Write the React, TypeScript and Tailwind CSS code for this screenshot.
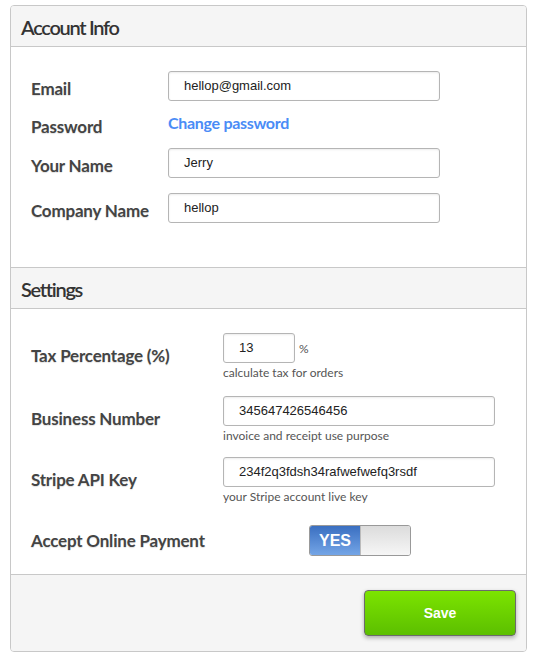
import React from "react";

const lato = { fontFamily: "Lato, 'Open Sans', sans-serif" };

function Label({ children, w }: { children: React.ReactNode; w: string }) {
  return (
    <div className={`${w} shrink-0 whitespace-nowrap font-['Lato',sans-serif] text-[17px] font-bold tracking-[-0.2px] text-[#444] [text-shadow:0_1px_1px_rgba(0,0,0,0.12)]`}>
      {children}
    </div>
  );
}

function Input({ value, w }: { value: string; w: string }) {
  return (
    <div
      className={`${w} h-[30px] rounded-[3px] border border-[#b5b5b5] bg-white pl-[15px] flex items-center font-['Liberation_Sans',Arial,sans-serif] text-[13px] text-[#222] shadow-[inset_0_1px_2px_rgba(0,0,0,0.08)]`}
    >
      {value}
    </div>
  );
}

function Header({ title }: { title: string }) {
  return (
    <div className="h-[41px] bg-[#f5f5f5] border-b border-[#c8c8c8] flex items-center pl-[10px] pt-[2px] font-['Lato',sans-serif] text-[20px] font-semibold tracking-[-1.3px] text-[#333]">
      {title}
    </div>
  );
}

function Helper({ children }: { children: React.ReactNode }) {
  return (
    <div className="h-[16px] pt-[2px] leading-[16px] font-['Lato',sans-serif] text-[12px] text-[#555]">{children}</div>
  );
}

export default function App() {
  return (
    <div className="w-[535px] h-[659px] bg-white pt-[5px] pl-[10px]" style={lato}>
      <div className="w-[517px] h-[647px] rounded-[4px] border border-[#c8c8c8] overflow-hidden flex flex-col">
        <Header title="Account Info" />
        <div className="h-[221px] shrink-0 border-b border-[#c8c8c8] pt-[24px] pl-[20px] flex flex-col">
          <div className="flex items-center h-[30px]">
            <div className="pt-[5px]"><Label w="w-[137px]">Email</Label></div>
            <Input value="hellop@gmail.com" w="w-[272px]" />
          </div>
          <div className="flex items-center h-[17px] mt-[15px]">
            <div className="pt-[5px]"><Label w="w-[137px]">Password</Label></div>
            <div className="font-['Lato',sans-serif] text-[16px] font-bold text-[#4a8cf6] tracking-[-0.3px] -mt-[3px]">
              Change password
            </div>
          </div>
          <div className="flex items-center h-[30px] mt-[15px]">
            <div className="pt-[5px]"><Label w="w-[137px]">Your Name</Label></div>
            <Input value="Jerry" w="w-[272px]" />
          </div>
          <div className="flex items-center h-[30px] mt-[15px]">
            <div className="pt-[5px]"><Label w="w-[137px]">Company Name</Label></div>
            <Input value="hellop" w="w-[272px]" />
          </div>
        </div>
        <Header title="Settings" />
        <div className="h-[266px] shrink-0 border-b border-[#c8c8c8] pt-[24px] pl-[20px] flex flex-col">
          <div className="flex items-center">
            <Label w="w-[192px]">Tax Percentage (%)</Label>
            <div className="flex flex-col">
              <div className="flex items-start">
                <Input value="13" w="w-[72px]" />
                <span className="ml-[4px] mt-[7px] font-['Lato',sans-serif] text-[12px] text-[#555]">%</span>
              </div>
              <Helper>calculate tax for orders</Helper>
            </div>
          </div>
          <div className="flex items-center mt-[17px]">
            <Label w="w-[192px]">Business Number</Label>
            <div className="flex flex-col">
              <Input value="345647426546456" w="w-[272px]" />
              <Helper>invoice and receipt use purpose</Helper>
            </div>
          </div>
          <div className="flex items-center mt-[15px]">
            <Label w="w-[192px]">Stripe API Key</Label>
            <div className="flex flex-col">
              <Input value="234f2q3fdsh34rafwefwefq3rsdf" w="w-[272px]" />
              <Helper>your Stripe account live key</Helper>
            </div>
          </div>
          <div className="flex items-center mt-[22px] h-[31px]">
            <Label w="w-[278px]">Accept Online Payment</Label>
            <div className="w-[102px] h-[31px] rounded-[3px] border border-[#999] flex overflow-hidden">
              <div className="w-[50px] h-full bg-gradient-to-b from-[#3a6fc1] to-[#74a5e6] flex items-center justify-center font-['Liberation_Sans',Arial,sans-serif] font-bold text-[16px] text-white">
                YES
              </div>
              <div className="flex-1 h-full border-l border-[#bbb] bg-gradient-to-b from-[#dcdcdc] to-[#f6f6f6]" />
            </div>
          </div>
        </div>
        <div className="flex-1 bg-[#f5f5f5] flex justify-end items-start pt-[15px] pr-[10px]">
          <button className="w-[152px] h-[46px] rounded-[4px] border border-[#6b6b6b] bg-gradient-to-b from-[#7ce400] to-[#5cbf00] shadow-[0_2px_4px_rgba(0,0,0,0.3)] font-['Liberation_Sans',Arial,sans-serif] font-bold text-[14px] text-white">
            Save
          </button>
        </div>
      </div>
    </div>
  );
}
